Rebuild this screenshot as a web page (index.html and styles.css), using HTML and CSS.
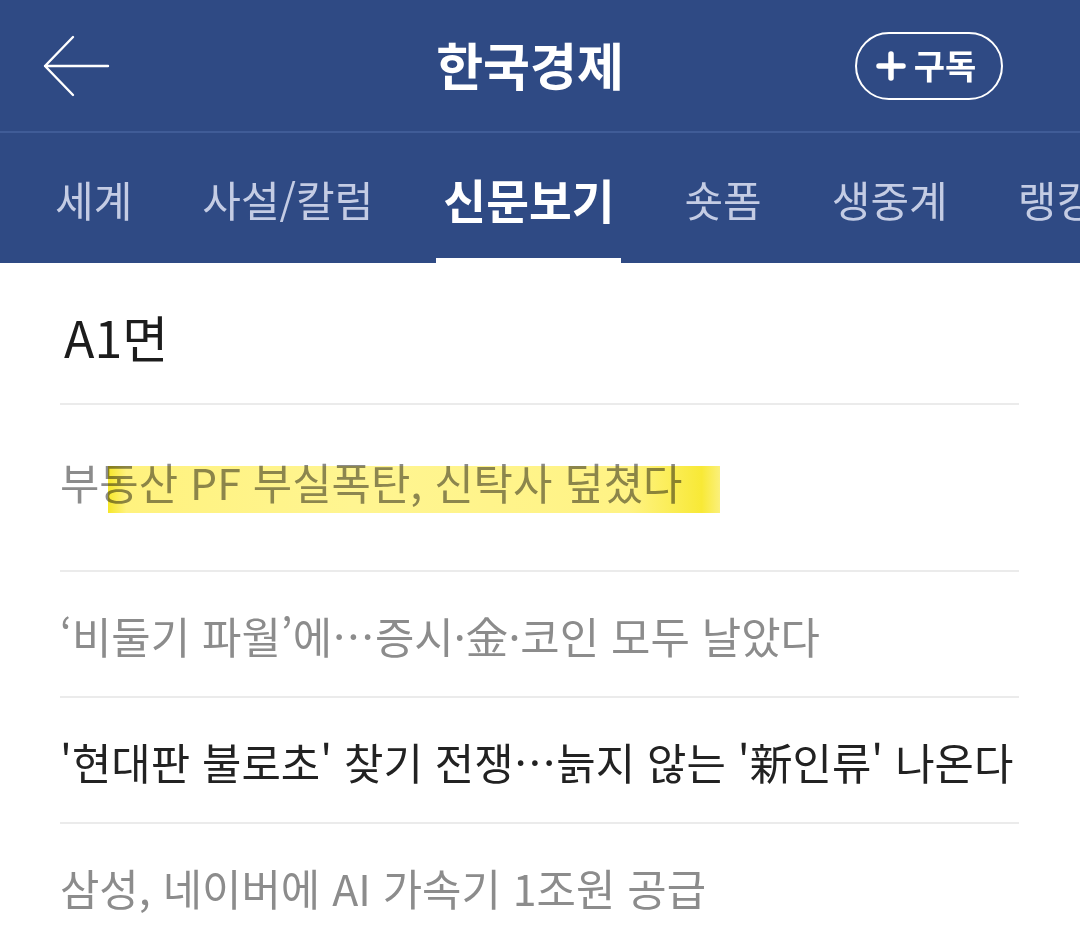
FILE: index.html
```html
<!DOCTYPE html>
<html lang="ko">
<head>
<meta charset="utf-8">
<link rel="stylesheet" href="styles.css">
</head>
<body>
<header class="topbar">
  <div class="back">
    <svg width="70" height="62" viewBox="0 0 70 62"><path d="M66 31 H3 M31 2 L3 31 L31 60" fill="none" stroke="#fff" stroke-width="2.4" stroke-linecap="round" stroke-linejoin="round"/></svg>
  </div>
  <h1 class="title">한국경제</h1>
  <div class="actions">
    <button class="sub"><svg class="plus" width="30" height="30" viewBox="0 0 30 30"><path d="M15 3 V27 M3 15 H27" stroke="#fff" stroke-width="5.5" stroke-linecap="round"/></svg><span>구독</span></button>
  </div>
</header>
<nav class="tabs">
  <span class="tab">세계</span>
  <span class="tab">사설/칼럼</span>
  <span class="tab active">신문보기</span>
  <span class="tab">숏폼</span>
  <span class="tab">생중계</span>
  <span class="tab">랭킹</span>
</nav>
<main class="content">
  <h2 class="page">A1면</h2>
  <ul class="list">
    <li class="item first read"><span class="hl-wrap">부동산 PF 부실폭탄, 신탁사 덮쳤다<span class="hl"></span></span></li>
    <li class="item read">‘비둘기 파월’에…증시·金·코인 모두 날았다</li>
    <li class="item">'현대판 불로초' 찾기 전쟁…늙지 않는 '新인류' 나온다</li>
    <li class="item read">삼성, 네이버에 AI 가속기 1조원 공급</li>
  </ul>
</main>
</body>
</html>
```
FILE: styles.css
```css
* { box-sizing: border-box; margin: 0; padding: 0; }
html, body { background: #fff; }
body {
  width: 1080px;
  height: 946px;
  overflow: hidden;
  font-family: "Noto Sans CJK KR", "Noto Sans", sans-serif;
}
.topbar {
  height: 133px;
  background: #2f4a84;
  border-bottom: 2px solid #405c97;
  display: grid;
  grid-template-columns: 1fr auto 1fr;
  align-items: center;
  padding: 0 62px 0 42px;
}
.back { display: flex; align-items: center; }
.back svg { display: block; }
.title {
  color: #fff;
  font-size: 51px;
  font-weight: 700;
  line-height: 1;
  padding-bottom: 2px;
}
.actions { display: flex; justify-content: flex-end; }
.sub {
  margin-right: 15px;
  width: 148px;
  height: 68px;
  border: 2.5px solid #fff;
  border-radius: 34px;
  background: transparent;
  color: #fff;
  font-family: "Noto Sans CJK KR", sans-serif;
  font-size: 34px;
  font-weight: 700;
  display: flex;
  align-items: center;
  justify-content: center;
  gap: 8px;
  padding: 0 6px 3px 0;
}
.plus { display: block; margin-top: 3px; }
.tabs {
  height: 130px;
  background: #2f4a84;
  display: flex;
  align-items: stretch;
  gap: 56px;
  padding-left: 48px;
  white-space: nowrap;
  overflow: hidden;
}
.tab {
  display: flex;
  align-items: center;
  padding: 5px 7px 0;
  border-bottom: 5px solid transparent;
  color: #c4cce4;
  font-size: 42px;
}
.tab.active {
  color: #fff;
  font-size: 46.5px;
  font-weight: 700;
  border-bottom-color: #fff;
}
.content { padding: 0 61px 0 60px; }
.page {
  height: 142px;
  padding: 46px 0 0 4px;
  font-size: 50px;
  font-weight: 400;
  color: #1c1c1c;
  line-height: 54px;
  border-bottom: 2px solid #ebebeb;
}
.list { list-style: none; }
.item {
  font-size: 42.8px;
  line-height: 52px;
  color: #222;
  white-space: nowrap;
  padding: 37px 0 35px;
  border-bottom: 2px solid #ebebeb;
}
.item.read { color: #8c8c8c; }
.item.first { padding: 50px 0 63px; }
.item:last-child { border-bottom: none; }
.hl-wrap { position: relative; display: inline-block; }
.hl {
  position: absolute;
  left: 48px;
  top: 11px;
  width: 612px;
  height: 47px;
  background: linear-gradient(90deg, #f6e72a 0%, #fff27e 3%, #fff591 40%, #fff385 85%, #f8e936 97%, #fbf07a 100%);
  mix-blend-mode: multiply;
}
```
